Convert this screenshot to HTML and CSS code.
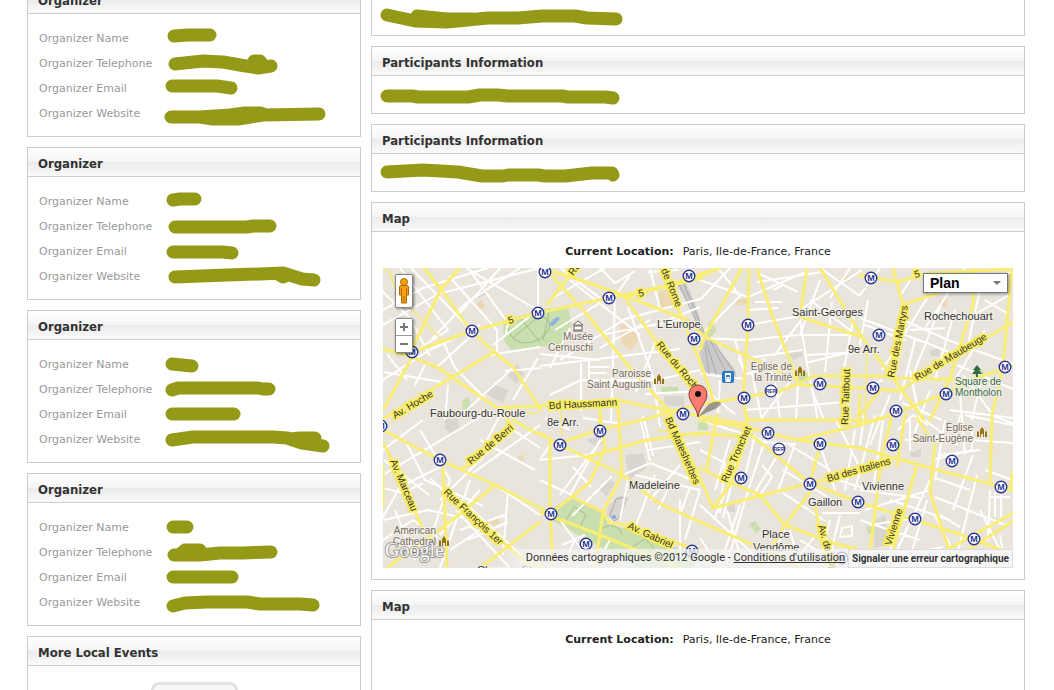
FILE: index.html
```html
<!DOCTYPE html>
<html lang="en">
<head>
<meta charset="utf-8">
<title>Event details</title>
<link rel="stylesheet" href="styles.css">
</head>
<body>
<main class="page">
  <div class="column column-side">
    <section class="panel">
      <h2 class="panel-title">Organizer</h2>
      <dl class="details">
        <dt>Organizer Name</dt><dd><svg class="mark" viewBox="0 0 190 25"><path d="M14 11L28 10L50 10"/></svg></dd>
        <dt>Organizer Telephone</dt><dd><svg class="mark" viewBox="0 0 190 25"><path d="M15 14L43 11L63 12L80 15L98 18L111 16M94 11L100 11L104 16"/></svg></dd>
        <dt>Organizer Email</dt><dd><svg class="mark" viewBox="0 0 190 25"><path d="M12 11L57 11L71 13"/></svg></dd>
        <dt>Organizer Website</dt><dd><svg class="mark" viewBox="0 0 190 25"><path d="M11 17L40 17L53 19L78 19L103 15L159 14M40 17L70 15L85 13L100 13L106 15"/></svg></dd>
      </dl>
    </section>
    <section class="panel">
      <h2 class="panel-title">Organizer</h2>
      <dl class="details">
        <dt>Organizer Name</dt><dd><svg class="mark" viewBox="0 0 190 25"><path d="M13 12L20 11L35 11"/></svg></dd>
        <dt>Organizer Telephone</dt><dd><svg class="mark" viewBox="0 0 190 25"><path d="M15 14L87 14L93 13L110 13"/></svg></dd>
        <dt>Organizer Email</dt><dd><svg class="mark" viewBox="0 0 190 25"><path d="M13 14L63 14L72 15"/></svg></dd>
        <dt>Organizer Website</dt><dd><svg class="mark" viewBox="0 0 190 25"><path d="M15 14L67 12L100 11L123 10L142 16L154 17M118 11L123 14L128 12"/></svg></dd>
      </dl>
    </section>
    <section class="panel">
      <h2 class="panel-title">Organizer</h2>
      <dl class="details">
        <dt>Organizer Name</dt><dd><svg class="mark" viewBox="0 0 190 25"><path d="M12 13L32 15"/></svg></dd>
        <dt>Organizer Telephone</dt><dd><svg class="mark" viewBox="0 0 190 25"><path d="M12 14L18 12L98 12L103 13L109 13"/></svg></dd>
        <dt>Organizer Email</dt><dd><svg class="mark" viewBox="0 0 190 25"><path d="M12 13L74 13"/></svg></dd>
        <dt>Organizer Website</dt><dd><svg class="mark" viewBox="0 0 190 25"><path d="M12 14L33 11L113 11L127 12L142 17L163 20M130 13L140 12L155 12"/></svg></dd>
      </dl>
    </section>
    <section class="panel">
      <h2 class="panel-title">Organizer</h2>
      <dl class="details">
        <dt>Organizer Name</dt><dd><svg class="mark" viewBox="0 0 190 25"><path d="M13 13L27 13"/></svg></dd>
        <dt>Organizer Telephone</dt><dd><svg class="mark" viewBox="0 0 190 25"><path d="M14 16L40 16L60 14L83 14L111 13M20 15L25 11L40 11"/></svg></dd>
        <dt>Organizer Email</dt><dd><svg class="mark" viewBox="0 0 190 25"><path d="M13 13L72 13"/></svg></dd>
        <dt>Organizer Website</dt><dd><svg class="mark" viewBox="0 0 190 25"><path d="M13 17L25 14L47 13L87 13L100 15L140 15L153 16"/></svg></dd>
      </dl>
    </section>
    <section class="panel">
      <h2 class="panel-title">More Local Events</h2>
      <div class="events"><div class="event-tile"></div></div>
    </section>
  </div>

  <div class="column column-main">
    <section class="panel">
      <h2 class="panel-title">Participants Information</h2>
      <div class="participants"><svg class="mark" viewBox="0 0 270 37"><path d="M15 17L43 23L75 24L116 20L146 20L170 18L203 18L215 20L244 21M45 18L75 21L100 21"/></svg></div>
    </section>
    <section class="panel">
      <h2 class="panel-title">Participants Information</h2>
      <div class="participants"><svg class="mark" viewBox="0 0 270 37"><path d="M15 20L40 20L46 21L96 21L108 19L126 19L136 20L190 20L196 21L233 21L241 22"/></svg></div>
    </section>
    <section class="panel">
      <h2 class="panel-title">Participants Information</h2>
      <div class="participants"><svg class="mark" viewBox="0 0 270 37"><path d="M15 18L51 16L86 18L110 22L131 22L136 21L166 21L173 22L193 22L220 19L240 19L241 21"/></svg></div>
    </section>
    <section class="panel">
      <h2 class="panel-title">Map</h2>
      <div class="map-body">
        <p class="location"><strong>Current Location:</strong><span>Paris, Ile-de-France, France</span></p>
        <div class="map">
          <svg class="map-art" viewBox="383 268 630 300" preserveAspectRatio="xMidYMid slice" role="img" aria-label="Map of Paris">
            <defs>
              <g id="metro"><circle r="5.8" fill="#fff" stroke="#2a3593" stroke-width="1.4"/><text class="metro-letter" y="3">M</text></g>
              <g id="rer"><circle r="5.8" fill="#fff" stroke="#2a3593" stroke-width="1.2"/><text class="rer-letter" y="2">RER</text></g>
              <path id="church" d="M-5 4V-1l1-1 1 1V4zM-2 4V-3L0-6 2-3V4H1V1H-1V4zM3 4V-1l1-1 1 1V4z" fill="#967312"/>
            </defs>
            <rect x="383" y="268" width="630" height="300" fill="#e9e5dc"/>
            <!-- blocks and buildings -->
            <g fill="#dad5ce">
              <path d="M476 291l8-4 4 6-9 5zM506 373l12-9 6 10-8 10zM485 393l7-9 16 6-5 14zM445 419l13 0 2 10-8 6-7-6zM625 455l18-2 4 15-18 12zM607 508l12-13 10 3-11 23-11-5zM587 440l12-5 6 8-9 4zM725 505l10-4v11h-10zM910 453l11-4v8h-11zM875 520l10-5 4 30-15 3zM788 352l12-3 3 7-10 4zM930 350l10-2v8h-9zM600 490l8-12 7 5-8 14zM664 396h20v10h-20z"/>
            </g>
            <g fill="#ebd9b3">
              <path d="M476 304l6-4 3 7-6 4zM620 325l8 0 2 7 8-2 0 11-7 10-10-8zM658 292l18-5 4 18-20 3zM735 300l12-2 1 6-12 1zM842 275l7 1v6l-6-1zM490 520l8-4 2 7-8 3zM518 457l6-3v6l-5 1zM939 300l8-2v9h-8z"/>
            </g>
            <g fill="#c9dfad">
              <path d="M503 320l32-8 14-4 19 0 4 18-8 18-18 2-35 4-7-9z"/>
              <path d="M553 508l18-12 30 14 8 15 20 4 66 26 0 13H640l-87-47z"/>
              <path d="M661 387h17v6h-17zM749 524l6-3 6 8-5 4zM463 400l5-3 4 12h-10zM795 374l15-2-2 10-12-1zM972 372l7-5 6 6-6 6zM866 527l8-1 2 6-8 2zM710 320l7 10-8 9-5-5zM864 343l6 4-3 3zM698 422h10v8h-10z"/>
            </g>
            <g fill="none" stroke="#a6bd8c" stroke-width="1">
              <path d="M507 324c14-8 30-10 40-5 8 8-3 20-15 23-15 3-22-3-25-18zM513 338l26-22M520 318l20 24M549 313l-6 27M565 522l9-15 12 7-6 14M600 530c10-8 20-4 22 5M630 548l15-9 9 9-9 9M655 550l12 10"/>
            </g>
            <path d="M552 321c5-5 9-5 7-1l-6 6-5-1z" fill="#8fb3d9"/>
            <path d="M610 515l6-16 10-2-6 20-6 4z" fill="none" stroke="#aaa" stroke-width="1"/>
            <circle cx="614" cy="517" r="2" fill="#7ba7dd"/>
            <!-- railway yard -->
            <path d="M675 282l9-4 12 28 9 30-1 7-14-38zM702 341l7-4 26 33 2 9-10 3-7-8-15-2-6-20z" fill="#c9c9c9"/>
            <path d="M678 282l27 58M682 280l22 52M706 342l11 34M710 340l20 40M705 346l4 28M712 340l23 33" stroke="#aaa" stroke-width="1" fill="none"/>
            <!-- side streets -->
            <g fill="none" stroke="#fff" stroke-width="2" stroke-linejoin="round">
              <path d="M383 310l40-22 65-20M400 268l48 62-40 26M383 325l55-31 102-26M411 268l61 63M383 292l27 26 20 38M449 276l48 54 0 22M468 268l40 55-3 14M500 268l-40 45M520 268l-54 35-34 36M445 340l-62 40M437 367l33-30M466 268l75 44M538 268v42l-45 35M540 347l-50 8M505 371l36-3M485 398l-30-30-12-27M407 380l-20-26M415 385l10-20M513 368l-53 48M448 385l-3 35M513 400l25-42M384 372l57 10M430 350l50-25"/>
              <path d="M549 300l56-32M555 330l50-30M560 360l65-41 75-20M615 299l-2 62-2 60M628 307l25 70 7 50M570 328l-20 40M540 366l140-17M540 354l60 6M581 363v48M589 360v20h20M589 367h20M589 373h18M550 395l31-15 80 0M630 275l-14 20M650 269l10 40M600 268l15 15 20-12M648 272l30-2M663 322l37-15M600 335l80-15M640 335l-70-55M656 340l-20 52M622 380l39-1 39-9M650 320l-50 28M560 268l40 30M645 394l55-3"/>
              <path d="M700 280l48 17 60-26M700 300l30-32M718 268l22 28-35 35M700 338l48 2M748 325l52-9M748 310l30-2M755 302h27M748 340l50-5M748 358l54-8M760 274l38 18M757 282l65-10M735 340l10 35M783 285l-10 5M804 316l-30 40M800 320l8 50 10 50M800 310l62-40M810 300l40 30M820 280l-20 55 62 0M807 355l53-3M832 302l-7 70M855 310l-15 80M806 363l40-10M738 358l8 16 20-5M700 374l45 5M705 390l30 24M720 380l-2 33M752 373l10 47M775 383l5 35M790 382l-30 38M745 410l100-8M798 382l-2 38M763 358l12 22M820 268l40 28M850 268l-20 30M812 390l12 30"/>
              <path d="M860 295l20-27M868 300l-8 45M860 318l64 24 30 12M903 305l60-20 50-13M918 268l-18 28M903 320l45 20 65 24M915 340l-15 60M932 290l-50 80M943 300l-30 75M955 310l-20 70M965 268l-40 60M982 280l-15 70M910 330l35-2M905 340l-40-15M985 300l25 15M965 320l44-25M985 330l-30 50M957 365l56 24M963 375l30 40M980 385l-8 35M890 395l-20 50M860 388l23-8M902 403l40 17M910 370l10 50M930 390l-18 50M960 395l5 60M950 410l63 8"/>
              <path d="M383 450l40-30M383 475l100-60M440 467l-40 20-17 30M405 440l20 40 58 26M420 430l30 50-20 60M470 475l70-50M440 500l60-60M470 480l-30 88M456 510l54 58M462 500l60 56M480 490l-40 45M508 490l-5 65M495 485l45 30M513 430l27 18M480 440l55 30M487 440l12-23M460 530l45-15M468 540l40-18M450 550l30-20M383 520l45-10 35 8M395 510l20 50M430 478l30 28M383 488l20 5 20-10M383 540l30-20 25 18M384 460l45 35"/>
              <path d="M540 460l48-5M540 480l32 15M560 495l45-60M573 467l18 20M600 440l-30 55M640 418l10 43M650 463l-27 12M650 463l50 20M648 450l52-8M635 475l65 15M680 465l-30 35M643 416l10 40M612 476l-40 40M628 480l-8 40M655 475l-20 53M670 485l-12 25M690 487l-10 28M553 440l-13 20M700 490l-15 50M560 520l35 48M576 538l-10 20M610 540l-16 28M680 500v60M562 545l23-10M583 418l40 6M570 430l-25-12"/>
              <path d="M700 450l25 13-5 50M730 440l-15 50M742 450l-28 70M755 435l-12 50M765 440l-20 60-18 64M778 455l-25 40M760 442l35 2-18 50M762 465l10 12-12 18M700 420l62 20M733 478l-10 40M727 510l13 45M740 505l-20 60M783 470l58 35M790 445l40 25M820 445l15 45M835 418l25 50M783 493l42 28M838 480l25 8M822 513h38M830 520l-10 40M840 515l-12 50M785 530l-20 38M790 530l10 38M820 530l-20 25M700 505l60 55M842 528l10-2v10l-12 1zM800 540l40 25M855 430l-10 60M700 538l20 30"/>
              <path d="M864 415l-4 30M875 415l-20 75M883 420l-10 70M898 430l15-15 15 10M905 440l35-4M910 420v30M860 490l60 8M865 510l65-20M890 500l60 20M930 480l-40 85M927 500l-20 68M918 415l40 30M945 420l-10 60M960 415l-5 30M972 430v20l-40 10M935 478l35 12M973 455l-20 55M977 475l-20 80M935 497l70 28M940 515l20 12M990 490l-2 50M995 492v25M1001 495v22M990 497h20M985 470l28 10M940 455l40-5M970 440l43 3M980 510l20 40M860 520l60 20M900 520l-15 48M990 415l23 8M870 525l40-6M935 515l25 50M903 555l40-8M1000 535l5 30M965 415l48 10"/>
            </g>
            <!-- avenues -->
            <g fill="none" stroke-linejoin="round" stroke-linecap="round">
              <path class="road-minor" d="M390 275l10 23 43 43M383 268l10 8M497 408l40 6M560 405l2 30M700 468l20 10M867 350l-2 70M841 372l3 48M600 405l-2 25M658 430l42 6"/>
              <g class="road">
                <path d="M460 268L441 289 413 347 412 357 383 410M424 268L441 289 469 328 494 352 513 367 541 410M412 352L472 331 538 313 609 298 623 295 666 286 710 271M623 297L702 278M383 419L494 352M383 349L412 357 437 367 497 408 540 406 617 400 641 405 700 416"/>
                <path d="M545 268L590 318 630 368 672 414M548 270L580 280 623 295 655 340 697 390M547 305L575 268M623 295L687 320 705 337 760 362 797 380M663 268L678 308 700 362 714 402M600 430L650 418 672 411 700 405 740 398 780 391 800 383 813 376 892 376M700 416L748 425M800 385L865 388 900 391M617 405L619 420"/>
                <path d="M742 268L705 336 700 350M749 268L748 325 743 398 748 430M757 268L772 315 797 378M807 268L800 317 862 337 M820 268L862 337 893 378 924 420M700 276L720 268M860 275L897 282 930 273 1013 269M893 268L903 305 890 378M975 268L973 305 950 378 930 420M900 390L1013 322M1012 268L1003 365 992 415 990 482M890 378L970 380 1013 366M875 421L947 393 973 378M903 305L940 292"/>
                <path d="M383 430L440 460 495 485 540 508M383 442L397 470 424 532M443 465L447 568M443 487L525 562M463 468L513 427 498 408M513 420L540 435M387 568L455 518 495 485M540 508L553 514M540 522L480 568M383 466v40M526 562L545 568"/>
                <path d="M540 433L560 445 623 475 657 502 700 522 770 552 800 568M560 443L598 430M587 457L647 440 700 433 748 437M550 438L550 512 553 568M598 400L605 448 590 482 572 497 550 513M618 400L622 475 603 512 595 568M572 497L603 512 610 523 627 525 705 553M540 512L553 517 595 533 680 568M667 410L700 478 713 508 810 483 860 472 883 462"/>
                <path d="M700 468L720 478 760 495 785 525 833 543 860 550M717 415L707 468M747 415L748 432 732 482 713 508M748 432L808 482M700 420L748 428 797 440 860 448M748 420L845 420 875 421M797 440L860 425 880 418M820 445L810 483 858 502 953 532 1013 554M810 492L785 525 760 568M815 505L827 568M893 412L882 455 868 568M905 415L897 465M917 465L888 568M917 418L935 445 930 492 955 568M943 552L1013 513M955 558L1013 521M860 448L880 454 920 465 1013 490M860 395L858 425M1013 470L1010 490M880 390L860 415"/>
              </g>
            </g>
            <!-- stations -->
            <g>
              <use href="#metro" x="545" y="272"/><use href="#metro" x="538" y="313"/><use href="#metro" x="472" y="331"/><use href="#metro" x="412" y="352"/><use href="#metro" x="609" y="298"/><use href="#metro" x="689" y="276"/><use href="#metro" x="694" y="339"/><use href="#metro" x="748" y="325"/><use href="#metro" x="871" y="278"/><use href="#metro" x="879" y="335"/><use href="#metro" x="1005" y="367"/><use href="#metro" x="820" y="384"/><use href="#metro" x="873" y="388"/><use href="#metro" x="946" y="394"/><use href="#metro" x="896" y="411"/><use href="#metro" x="744" y="398"/><use href="#metro" x="683" y="414"/><use href="#metro" x="600" y="431"/><use href="#metro" x="560" y="445"/><use href="#metro" x="440" y="460"/><use href="#metro" x="551" y="514"/><use href="#metro" x="586" y="544"/><use href="#metro" x="692" y="551"/><use href="#metro" x="768" y="433"/><use href="#metro" x="820" y="444"/><use href="#metro" x="741" y="478"/><use href="#metro" x="810" y="484"/><use href="#metro" x="858" y="502"/><use href="#metro" x="893" y="445"/><use href="#metro" x="952" y="461"/><use href="#metro" x="1001" y="487"/><use href="#metro" x="915" y="519"/><use href="#metro" x="974" y="539"/><use href="#metro" x="381" y="426"/><use href="#metro" x="842" y="558"/>
              <use href="#rer" x="771" y="391"/><use href="#rer" x="779" y="449"/>
              <use href="#church" x="659" y="380"/><use href="#church" x="800" y="372"/><use href="#church" x="982" y="433"/><use href="#church" x="444" y="542"/>
              <rect x="722" y="371" width="12" height="12" rx="2" fill="#2a78c2"/>
              <path d="M725 373h6v7h-6zM725 382l1-2h4l1 2" fill="#fff"/><path d="M726 375h4v2h-4zM726 378h1v1h-1zM729 378h1v1h-1z" fill="#2a78c2"/>
              <path d="M573 325l5-4 5 4zM574 326h8v4h-8zM573 331h10" fill="#fff" stroke="#75695c" stroke-width="1"/>
              <path d="M977 365l4 5h-2l3 4h-4v3h-2v-3h-4l3-4h-2z" fill="#356a45"/>
            </g>
            <!-- street names -->
            <g class="street">
              <text transform="translate(395 419) rotate(-31)">Av. Hoche</text>
              <text transform="translate(549 409) rotate(-3)">Bd Haussmann</text>
              <text transform="translate(656 345) rotate(50)">Rue du Roch</text>
              <text transform="translate(661 270) rotate(68)">de Rome</text>
              <text transform="translate(573 276) rotate(-52)">Ru</text>
              <text transform="translate(894 378) rotate(-79)">Rue des Martyrs</text>
              <text transform="translate(917 381) rotate(-31)">Rue de Maubeuge</text>
              <text transform="translate(848 425) rotate(-88)">Rue Taitbout</text>
              <text transform="translate(471 465) rotate(-40)">Rue de Berri</text>
              <text transform="translate(390 461) rotate(67)">Av. Marceau</text>
              <text transform="translate(443 493) rotate(43)">Rue François 1er</text>
              <text transform="translate(665 419) rotate(66)">Bd Malesherbes</text>
              <text transform="translate(627 528) rotate(25)">Av. Gabriel</text>
              <text transform="translate(727 483) rotate(-66)">Rue Tronchet</text>
              <text transform="translate(828 482) rotate(-16)">Bd des Italiens</text>
              <text transform="translate(818 526) rotate(74)">Av. de l'Opéra</text>
              <text transform="translate(891 546) rotate(-72)">Vivienne</text>
              <text transform="translate(509 324) rotate(-15)">5</text><text transform="translate(639 297) rotate(-12)">5</text><text transform="translate(915 278) rotate(-12)">5</text>
            </g>
            <!-- districts -->
            <g class="district">
              <text x="430" y="417">Faubourg-du-Roule</text><text x="657" y="328">L'Europe</text><text x="792" y="316">Saint-Georges</text><text x="924" y="320">Rochechouart</text><text x="848" y="353">9e Arr.</text><text x="547" y="426">8e Arr.</text><text x="629" y="489">Madeleine</text><text x="808" y="506">Gaillon</text><text x="862" y="490">Vivienne</text><text x="762" y="538">Place</text><text x="753" y="551">Vendôme</text><text x="477" y="574">Champs-Élysées</text>
            </g>
            <g class="landmark">
              <text x="593" y="340">Musée</text><text x="593" y="351">Cernuschi</text><text x="651" y="377">Paroisse</text><text x="651" y="388">Saint Augustin</text><text x="792" y="370">Eglise de</text><text x="792" y="381">la Trinité</text><text x="973" y="431">Église</text><text x="973" y="442">Saint-Eugène</text><text x="436" y="534">American</text><text x="436" y="545">Cathedral</text><text x="434" y="556">in Paris</text>
            </g>
            <g class="garden"><text x="955" y="385">Square de</text><text x="955" y="396">Montholon</text></g>
            <!-- location pin -->
            <path d="M698 417l10-12c5-4 11-4 13-2 0 4-8 7-13 9z" fill="#333" opacity=".45"/>
            <path d="M698 417c-1-10-9-14-9-23a9 9 0 0 1 18 0c0 9-8 13-9 23z" fill="#fb7a70" stroke="#8c3a35" stroke-width="1"/>
            <circle cx="698" cy="394" r="3" fill="#111"/>
            <text class="brand" x="385" y="557">Google</text>
          </svg>
          <div class="map-tools">
            <button class="pegman" type="button" aria-label="Street View"><svg viewBox="0 0 12 28"><circle cx="6" cy="5" r="3.500"/><path d="M1.500 10q0-1.500 2-1.500h5q2 0 2 1.500v8H8.500v8h-5v-8H1.500z"/><path d="M3.500 11v7M8.500 11v7M6 19v6"/></svg></button>
            <div class="zoom"><button type="button" aria-label="Zoom in"><svg viewBox="0 0 8 8"><path d="M0 4h8M4 0v8"/></svg></button><button type="button" aria-label="Zoom out"><svg viewBox="0 0 8 8"><path d="M0 4h8"/></svg></button></div>
          </div>
          <div class="map-type"><select aria-label="Map type"><option>Plan</option></select></div>
          <div class="map-footer">
            <span class="credits">Données cartographiques ©2012 Google - <a href="#terms">Conditions d'utilisation</a></span>
            <a class="report" href="#report">Signaler une erreur cartographique</a>
          </div>
        </div>
      </div>
    </section>
    <section class="panel">
      <h2 class="panel-title">Map</h2>
      <div class="map-body map-pending">
        <p class="location"><strong>Current Location:</strong><span>Paris, Ile-de-France, France</span></p>
      </div>
    </section>
  </div>
</main>
</body>
</html>
```
FILE: styles.css
```css
* { box-sizing: border-box; }
body {
  margin: 0;
  background: #fff;
  color: #333;
  font: 11px/18px "DejaVu Sans", Verdana, sans-serif;
}
h2, p, dl, dd { margin: 0; }
.page {
  display: grid;
  grid-template-columns: 334fr 654fr;
  gap: 10px;
  align-items: start;
  height: 100vh;
  padding: 0 29px 0 27px;
  overflow: hidden;
}
.column { display: flex; flex-direction: column; gap: 10px; min-width: 0; }
.column-side { margin-top: -16px; }
.column-main { margin-top: -32px; }
.panel { border: 1px solid #ccc; background: #fff; }
.panel-title {
  padding: 4px 10px 0;
  border-bottom: 1px solid #ccc;
  background: linear-gradient(#fff 0%, #f5f5f5 49%, #ebebeb 50%, #fafafa 100%);
  font: bold 13px/24px "DejaVu Sans Condensed", "DejaVu Sans", Tahoma, sans-serif;
  color: #333;
}
.details {
  display: grid;
  grid-template-columns: 121px 1fr;
  grid-auto-rows: 25px;
  padding: 11px;
  line-height: 27px;
  color: #999;
}
.details .mark { width: 190px; height: 25px; }
.mark {
  display: block;
  overflow: visible;
  fill: none;
  stroke: #949a17;
  stroke-width: 13;
  stroke-linecap: round;
  stroke-linejoin: round;
}
.participants .mark { width: 270px; height: 37px; }
.events { padding: 16px 11px; }
.event-tile {
  width: 87px;
  height: 80px;
  margin: 0 auto;
  border: 3px solid #e2e2e2;
  border-radius: 8px;
  background: #f8f8f8;
}
.map-body { padding: 11px; }
.map-pending { min-height: 347px; }
.location {
  display: flex;
  justify-content: center;
  gap: 9px;
  padding-bottom: 7px;
  color: #222;
}
.map { position: relative; height: 300px; overflow: hidden; font-family: "Liberation Sans", Arial, sans-serif; }
.map-art { display: block; width: 100%; height: 100%; }
.road path { stroke: #f9ee73; stroke-width: 3; }
.road-minor { stroke: #f3e98c; stroke-width: 2; }
.metro-letter { font: bold 9px "Liberation Sans", Arial, sans-serif; fill: #2a3593; text-anchor: middle; }
.rer-letter { font: bold 5px "Liberation Sans", Arial, sans-serif; fill: #2a3593; text-anchor: middle; }
.street text { font-size: 10px; fill: #333; stroke: #f9ee5f; stroke-width: 4px; paint-order: stroke; stroke-linejoin: round; }
.district text { font-size: 11px; fill: #333; stroke: #f4f1ea; stroke-width: 2px; paint-order: stroke; }
.landmark text { font-size: 10px; fill: #75695c; stroke: #f4f1ea; stroke-width: 2px; paint-order: stroke; text-anchor: end; }
.garden text { font-size: 10px; fill: #356a45; stroke: #f4f1ea; stroke-width: 2px; paint-order: stroke; }
.brand { font: 20px "Liberation Serif", serif; fill: #fff; stroke: #8b8b8b; stroke-width: 2px; paint-order: stroke; opacity: .8; }
.map-tools {
  position: absolute;
  top: 6px;
  left: 12px;
  display: flex;
  flex-direction: column;
  gap: 10px;
  width: 18px;
}
.map-tools button {
  display: flex;
  align-items: center;
  justify-content: center;
  width: 100%;
  padding: 0;
  border: 0;
  background: #fff;
}
.map-tools .pegman, .zoom { border: 1px solid #888; border-radius: 2px; box-shadow: 1px 1px 3px rgba(0, 0, 0, .5); }
.map-tools .pegman { height: 34px; }
.pegman svg { width: 12px; height: 28px; fill: #f5a00c; stroke: #b06a00; stroke-width: 1; }
.zoom button { height: 16px; }
.zoom button + button { height: 17px; border-top: 1px solid #999; }
.zoom svg { width: 8px; height: 8px; stroke: #777; stroke-width: 2; }
.map-type { position: absolute; top: 5px; right: 5px; }
.map-type::after {
  content: "";
  position: absolute;
  top: 8px;
  right: 7px;
  border: 4px solid transparent;
  border-top-color: #777;
  border-bottom: 0;
}
.map-type select {
  display: block;
  width: 85px;
  height: 20px;
  padding: 0 6px;
  border: 1px solid #717b87;
  border-radius: 0;
  background: #fff;
  box-shadow: 1px 1px 3px rgba(0, 0, 0, .4);
  color: #000;
  font: bold 14px "Liberation Sans", Arial, sans-serif;
  appearance: none;
}
.map-footer {
  position: absolute;
  right: 0;
  bottom: 0;
  display: flex;
  height: 19px;
  line-height: 18px;
  font-family: Roboto, "Liberation Sans", Arial, sans-serif;
}
.credits {
  padding: 0 3px 0 24px;
  background: linear-gradient(90deg, rgba(245, 245, 245, 0), rgba(245, 245, 245, .75) 24px);
  color: #333;
  font-size: 11px;
}
.credits a { color: #333; }
.report {
  padding: 0 3px;
  border: 1px solid #ddd;
  background: #f5f5f5;
  color: #333;
  font-size: 10px;
  line-height: 17px;
  font-weight: bold;
  text-decoration: none;
}
```
